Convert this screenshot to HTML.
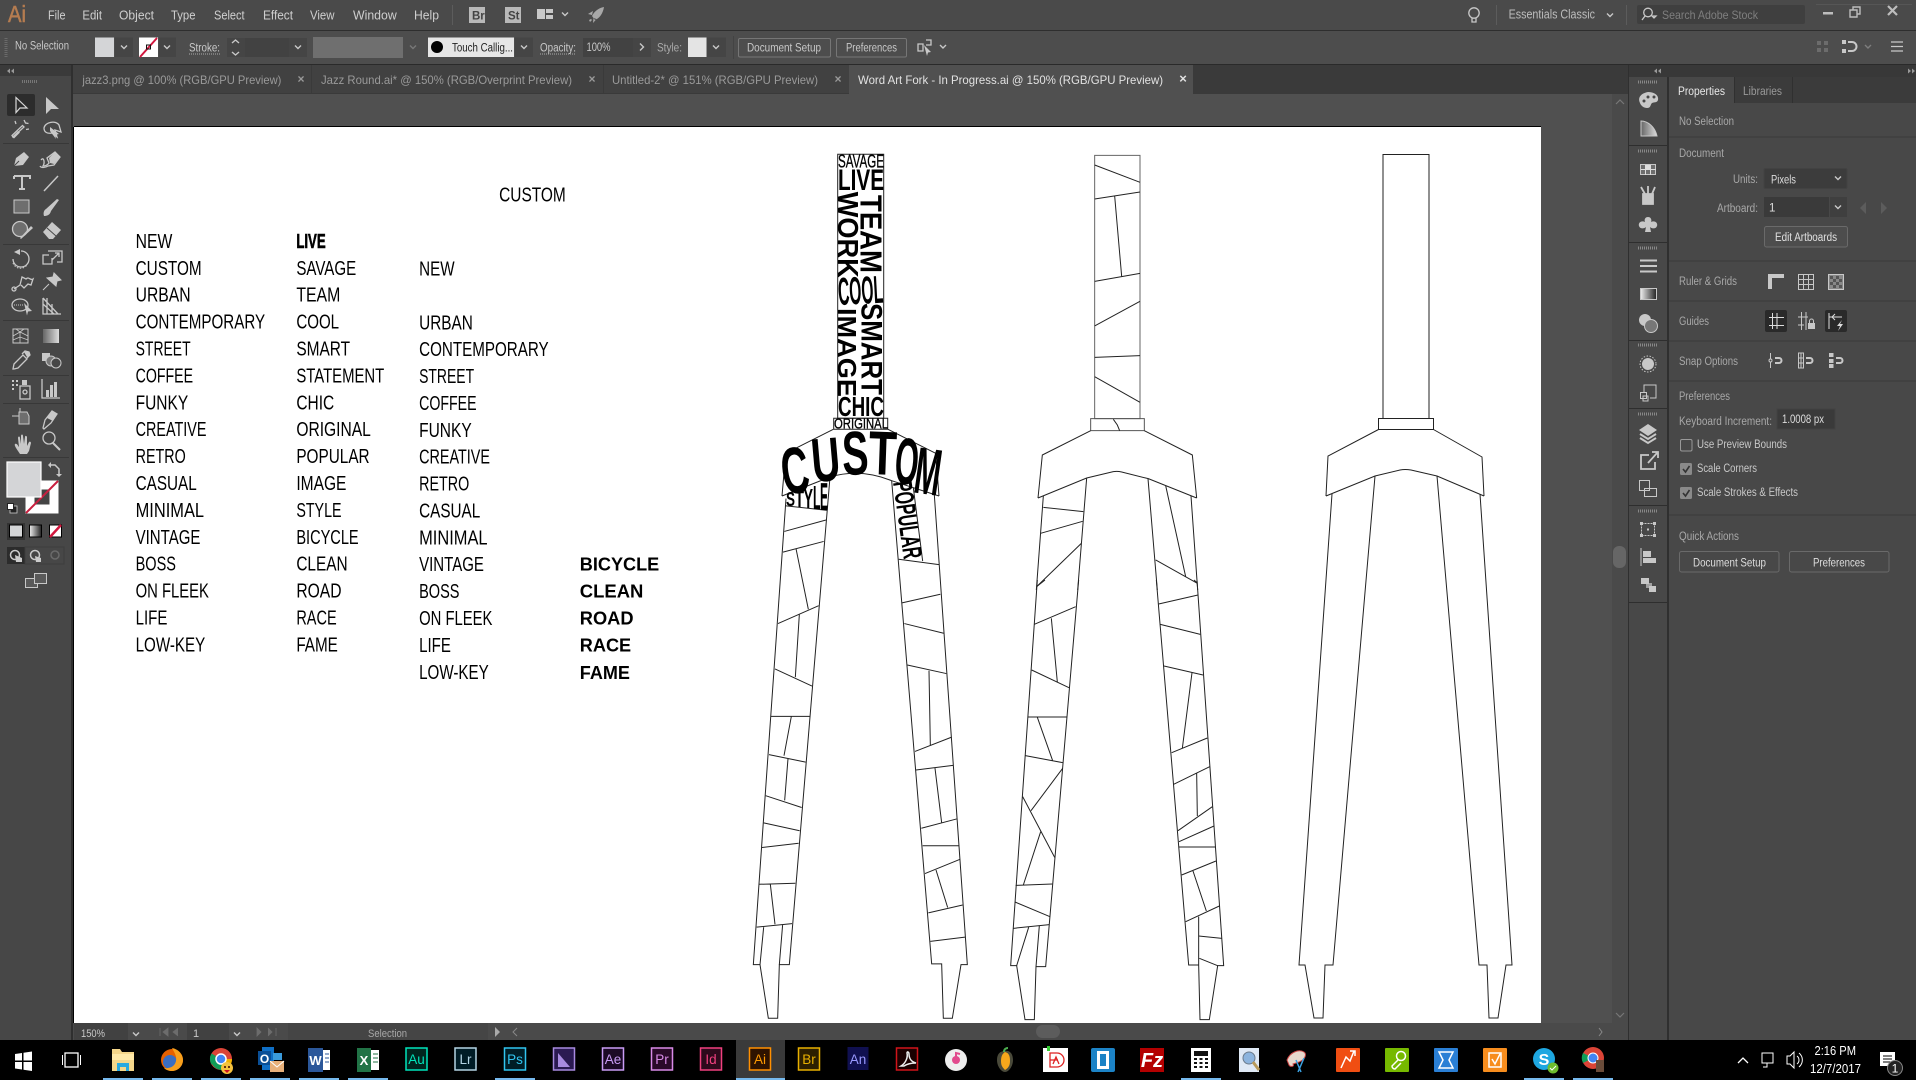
<!DOCTYPE html>
<html><head><meta charset="utf-8"><title>Adobe Illustrator</title>
<style>
html,body{margin:0;padding:0;background:#000;width:1916px;height:1080px;overflow:hidden}
svg{display:block;position:absolute;left:0;top:0}
text{font-family:"Liberation Sans",sans-serif}
.m{font-size:13px;fill:#cfcfcf}
.s{font-size:11.5px;fill:#c8c8c8}
.d{font-size:11.5px;fill:#a8a8a8}
.t{font-size:12px;fill:#9a9a9a}
.c{font-size:16.4px;fill:#000}
.b{font-size:15.4px;fill:#000;font-weight:bold}
.f *{fill:none;stroke:#222;stroke-width:1;vector-effect:non-scaling-stroke}
.k{font-weight:bold;fill:#000}
.ic{fill:none;stroke:#c8c8c8;stroke-width:1.3}
.fl{fill:#c8c8c8}
.ch{fill:none;stroke:#c8c8c8;stroke-width:1.4}
.tb{font-size:13.5px;text-anchor:middle}
</style></head><body>
<svg width="1916" height="1080" viewBox="0 0 1916 1080" xmlns="http://www.w3.org/2000/svg">
<defs>
<path id="ch" class="ch" d="M-3 -1.5L0 1.5L3 -1.5"/>
<linearGradient id="g1"><stop offset="0" stop-color="#666"/><stop offset="1" stop-color="#ddd"/></linearGradient><linearGradient id="g2"><stop offset="0" stop-color="#eee"/><stop offset="1" stop-color="#222"/></linearGradient>
</defs>
<!-- base -->
<rect width="1916" height="1080" fill="#505050"/>
<!-- menu bar -->
<rect width="1916" height="30" fill="#4a4a4a"/>
<rect y="30" width="1916" height="1" fill="#2e2e2e"/>
<text x="8" y="22" font-size="23" fill="#b57c50" stroke="#b57c50" stroke-width=".5" textLength="18" lengthAdjust="spacingAndGlyphs">Ai</text>
<text class="m" x="48" y="19.5" textLength="17.5" lengthAdjust="spacingAndGlyphs">File</text>
<text class="m" x="82.4" y="19.5" textLength="19.6" lengthAdjust="spacingAndGlyphs">Edit</text>
<text class="m" x="119" y="19.5" textLength="35" lengthAdjust="spacingAndGlyphs">Object</text>
<text class="m" x="171" y="19.5" textLength="24.5" lengthAdjust="spacingAndGlyphs">Type</text>
<text class="m" x="214" y="19.5" textLength="30.6" lengthAdjust="spacingAndGlyphs">Select</text>
<text class="m" x="263" y="19.5" textLength="30" lengthAdjust="spacingAndGlyphs">Effect</text>
<text class="m" x="310" y="19.5" textLength="24.5" lengthAdjust="spacingAndGlyphs">View</text>
<text class="m" x="353" y="19.5" textLength="43.7" lengthAdjust="spacingAndGlyphs">Window</text>
<text class="m" x="414" y="19.5" textLength="25" lengthAdjust="spacingAndGlyphs">Help</text>
<rect x="452" y="5" width="1" height="20" fill="#5c5c5c"/>
<rect x="469" y="7" width="16" height="16" fill="#b9b9b9"/><text x="472" y="19.5" font-size="11.5" font-weight="bold" fill="#444">Br</text>
<rect x="505" y="7" width="16" height="16" fill="#b9b9b9"/><text x="508" y="19.5" font-size="11.5" font-weight="bold" fill="#444">St</text>
<rect x="537" y="9" width="8" height="10" fill="#c8c8c8"/><rect x="546" y="9" width="7" height="4" fill="#c8c8c8"/><rect x="546" y="15" width="7" height="4" fill="#c8c8c8"/>
<use href="#ch" x="565" y="14"/>
<path d="M604 7C598 8 594 12 592 16L595 20C600 18 603 13 604 7ZM588 14l5-3-1 4zM593 23l.5-5 3 1z" fill="#a8a8a8"/><path d="M589 20l2-1 1 1-2 2z" fill="#a8a8a8"/>
<!-- right of menu bar -->
<circle cx="1474" cy="13" r="5.2" class="ic"/><path d="M1472 18v4h4v-4" class="ic"/>
<rect x="1496" y="5" width="1" height="20" fill="#5c5c5c"/>
<text class="m" x="1508.6" y="18.5" textLength="86.4" lengthAdjust="spacingAndGlyphs" style="fill:#bdbdbd">Essentials Classic</text>
<use href="#ch" x="1610" y="15"/>
<rect x="1626" y="5" width="1" height="20" fill="#5c5c5c"/>
<rect x="1637" y="5" width="168" height="19" rx="2" fill="#3f3f3f"/>
<circle cx="1648" cy="12.5" r="4.3" class="ic"/><path d="M1645 16l-3 4M1652 16h4l-2 2z" class="ic"/>
<text x="1662" y="19" font-size="12" fill="#7f7f7f" textLength="96" lengthAdjust="spacingAndGlyphs">Search Adobe Stock</text>
<rect x="1823" y="12" width="10" height="2.5" fill="#bdbdbd"/>
<path d="M1850 10h7v7h-7zM1853 10v-3h7v7h-3" fill="none" stroke="#bdbdbd" stroke-width="1.4"/>
<path d="M1888 6l9 9M1897 6l-9 9" stroke="#bdbdbd" stroke-width="2.2"/>
<rect x="1816" y="4" width="96" height="1" fill="#565656"/>
<!-- control bar -->
<rect y="31" width="1916" height="33" fill="#4d4d4d"/>
<rect y="64" width="1916" height="1" fill="#2a2a2a"/>
<path d="M6 38V57" stroke="#6a6a6a" stroke-width="3" stroke-dasharray="1 1"/>
<text class="s" x="15" y="49.5" textLength="54" lengthAdjust="spacingAndGlyphs">No Selection</text>
<rect x="95" y="37.5" width="19" height="19.5" fill="#d4d5d7"/>
<rect x="115" y="37.5" width="18" height="19.5" fill="#454545"/><use href="#ch" x="124" y="47"/>
<rect x="139" y="37.5" width="19" height="19.5" fill="#fff"/><path d="M140 57L157 38" stroke="#d2173e" stroke-width="2"/><rect x="146.500" y="45" width="4" height="4" fill="none" stroke="#111"/>
<rect x="159" y="37.5" width="17" height="19.5" fill="#454545"/><use href="#ch" x="167" y="47"/>
<text class="s" x="189" y="51.5" textLength="31" lengthAdjust="spacingAndGlyphs">Stroke:</text>
<path d="M189 54h31" stroke="#aaa" stroke-dasharray="1 1"/>
<rect x="227" y="38" width="18" height="19" fill="#454545"/>
<path d="M232 43l3.500-3 3.500 3M232 52l3.500 3 3.500-3" class="ch"/>
<rect x="245" y="38" width="44" height="19" fill="#424242"/>
<rect x="289" y="38" width="18" height="19" fill="#454545"/><use href="#ch" x="298" y="47"/>
<rect x="313" y="37" width="90" height="21" fill="#6f6f6f"/>
<use href="#ch" x="413" y="47" opacity=".35"/>
<rect x="428" y="37.500" width="86" height="19.500" fill="#e6e6e6"/>
<circle cx="437" cy="47" r="6" fill="#000"/>
<text x="452" y="51.500" font-size="11.500" fill="#222" textLength="61" lengthAdjust="spacingAndGlyphs">Touch Callig...</text>
<rect x="515" y="37.500" width="18" height="19.500" fill="#454545"/><use href="#ch" x="524" y="47"/>
<text class="s" x="540" y="51.500" textLength="36" lengthAdjust="spacingAndGlyphs">Opacity:</text>
<path d="M540 54h36" stroke="#aaa" stroke-dasharray="1 1"/>
<rect x="583" y="38" width="50" height="19" fill="#424242"/>
<text class="s" x="586.500" y="51" textLength="24" lengthAdjust="spacingAndGlyphs">100%</text>
<rect x="633" y="38" width="18" height="19" fill="#454545"/><path d="M640 43.500l3.500 3.500-3.500 3.500" class="ch"/>
<text class="s" x="657" y="51.500" textLength="25" lengthAdjust="spacingAndGlyphs" style="fill:#aaa">Style:</text>
<rect x="688" y="37.500" width="18.500" height="19.500" fill="#e4e4e4"/>
<rect x="707" y="37.500" width="19" height="19.500" fill="#454545"/><use href="#ch" x="716" y="47"/>
<rect x="733" y="36" width="1" height="23" fill="#434343"/>
<rect x="738.500" y="38.500" width="92" height="18.500" rx="1.500" fill="#4d4d4d" stroke="#767676"/>
<text class="s" x="747" y="51.500" textLength="74" lengthAdjust="spacingAndGlyphs">Document Setup</text>
<rect x="836.500" y="38.500" width="70" height="18.500" rx="1.500" fill="#4d4d4d" stroke="#767676"/>
<text class="s" x="846" y="51.500" textLength="51" lengthAdjust="spacingAndGlyphs">Preferences</text>
<path d="M918 44h5v7h-5zM926 40h5v5h-5" class="ic" stroke-width="1"/><path d="M924 45l7 7-3 .5-1 3.500z" class="fl"/>
<use href="#ch" x="943" y="46.500"/>
<path d="M1817 41h4v4h-4zM1824 41h4v4h-4zM1817 48h4v4h-4zM1824 48h4v4h-4z" fill="#6c6c6c"/>
<rect x="1842" y="40" width="4" height="4" fill="#c8c8c8"/><rect x="1842" y="49" width="4" height="4" fill="#c8c8c8"/><path d="M1848 42h4a4 4 0 010 9h-4" fill="none" stroke="#c8c8c8" stroke-width="2"/>
<use href="#ch" x="1868" y="46.500" opacity=".4"/>
<path d="M1891 42h12M1891 46.500h12M1891 51h12" stroke="#c8c8c8" stroke-width="1.200"/>
<!-- tab bar -->
<rect x="73" y="65" width="1555" height="29" fill="#3a3a3a"/>
<rect x="73" y="65" width="238" height="28" fill="#414141"/>
<rect x="312" y="65" width="291" height="28" fill="#414141"/>
<rect x="604" y="65" width="245" height="28" fill="#414141"/>
<rect x="849" y="65" width="344" height="29" fill="#505050"/>
<text class="t" x="82.400" y="84" textLength="199" lengthAdjust="spacingAndGlyphs">jazz3.png @ 100% (RGB/GPU Preview)</text>
<text x="301" y="83" font-size="12" font-weight="bold" fill="#9a9a9a" text-anchor="middle">×</text>
<text class="t" x="321" y="84" textLength="251" lengthAdjust="spacingAndGlyphs">Jazz Round.ai* @ 150% (RGB/Overprint Preview)</text>
<text x="592" y="83" font-size="12" font-weight="bold" fill="#9a9a9a" text-anchor="middle">×</text>
<text class="t" x="612" y="84" textLength="206" lengthAdjust="spacingAndGlyphs">Untitled-2* @ 151% (RGB/GPU Preview)</text>
<text x="838" y="83" font-size="12" font-weight="bold" fill="#9a9a9a" text-anchor="middle">×</text>
<text x="858" y="84" font-size="12" fill="#e2e2e2" textLength="305" lengthAdjust="spacingAndGlyphs">Word Art Fork - In Progress.ai @ 150% (RGB/GPU Preview)</text>
<text x="1183" y="83" font-size="13" font-weight="bold" fill="#e2e2e2" text-anchor="middle">×</text>
<!-- toolbar -->
<rect y="65" width="73" height="975" fill="#3a3a3a"/>
<rect y="76" width="71" height="964" fill="#474747"/>
<rect x="71" y="65" width="2" height="975" fill="#2f2f2f"/>
<path d="M7 71l3-2.500v5zM11 71l3-2.500v5z" fill="#999"/>
<path d="M22 81.500H37" stroke="#777" stroke-width="3" stroke-dasharray="1 1"/>
<g fill="#383838">
<rect x="3" y="143" width="66" height="1"/><rect x="3" y="244" width="66" height="1"/><rect x="3" y="320" width="66" height="1"/><rect x="3" y="375" width="66" height="1"/><rect x="3" y="403" width="66" height="1"/><rect x="3" y="457" width="66" height="1"/>
</g>
<rect x="7" y="94" width="28" height="22" rx="2" fill="#2c2c2c"/>
<!-- tools -->
<path d="M16 97.500v15l4-4.500 7 0z" fill="none" stroke="#d8d8d8" stroke-width="1.200"/>
<path d="M46 97v17l5-5h8z" class="fl"/>
<path d="M13 137l11-10-1.500-1.500L12 135.500zM24 120l1.500 3 3 .5M15 121l1 3M29 129l-3 .5" class="ic"/><path d="M12 137l6-6 2 1.500-6 6z" class="fl"/>
<path d="M44 128c1-6 12-8 15-3l2 7-6-2 2 7-5-4c-5 1-8-1-8-5z" fill="none" stroke="#c8c8c8" stroke-width="1.300"/><path d="M50 127l9 7-4 1 1 4-6-8z" class="fl"/>
<path d="M14 166l2-8 8-6 5 5-6 8z" class="fl"/><path d="M14 166l5-5" stroke="#474747"/>
<path d="M41 160c3-4 4 3 2 6 4 0 5-2 6-3l-2-5 8-6 5 5-6 8-6 1c-3 2-7 2-8 0" fill="none" stroke="#c8c8c8" stroke-width="1.300"/><path d="M49 158l6-6 5 5-6 7-4-1z" class="fl"/>
<path d="M14 176h16v3M22 176v13M19 189h6M14 176v3" fill="none" stroke="#c8c8c8" stroke-width="2"/>
<path d="M44 191l14-15" stroke="#c8c8c8" stroke-width="1.500"/>
<rect x="14" y="200" width="15" height="13" fill="#6e6e6e" stroke="#c8c8c8" stroke-width="1"/>
<path d="M44 216c3 0 6-1 7-5l8-11-2-1-11 10c-2 1-3 4-2 7z" class="fl"/>
<circle cx="20" cy="229" r="7.500" fill="#6e6e6e" stroke="#c8c8c8" stroke-width="1.300"/><path d="M20 238l11-12 2 2-12 11z" class="fl"/>
<path d="M43 232l9-10 9 8-8 9h-4z" class="fl"/><path d="M47 228l9 8" stroke="#474747"/>
<path d="M21 251a8 8 0 11-8 8" class="ic"/><path d="M14 252l6-3v6z" class="fl"/><path d="M13 263a8 8 0 0014 2" stroke="#c8c8c8" stroke-dasharray="1.500 1.500" fill="none"/>
<path d="M49 255h-6v9h9v-6M48 251h14v11h-5" class="ic"/><path d="M52 260l7-7M55 253h4v4" class="ic"/>
<path d="M14 289l6-4 2-8 4 2c3-3 4 2 7 0l-2 6-3-1-4 4-3-3" class="ic" stroke-width="1.600"/><circle cx="14" cy="289" r="2" class="ic"/>
<path d="M43 290l6-6M47 278l9 8 1-5 4-1-7-7-1 4z" fill="#c8c8c8" stroke="#c8c8c8"/>
<ellipse cx="20" cy="305" rx="8" ry="6" class="ic"/><path d="M14 305h10" stroke="#c8c8c8" stroke-dasharray="1 1"/><path d="M24 303l8 8-4 .5-1 4z" class="fl"/>
<path d="M43 298v16h18M43 298l15 16M43 304l11 10M47 298v16M52 304v10" class="ic" stroke-width="1"/>
<rect x="13" y="329" width="15" height="14" fill="none" stroke="#c8c8c8"/><path d="M13 336l7-4 8 4M20 332v11M13 340l7-3 8 3M16 329l4 3 4-3" fill="none" stroke="#c8c8c8" stroke-width=".8"/>
<rect x="43" y="329" width="16" height="14" fill="url(#g1)"/>
<path d="M13 369l1-5 9-9 4 4-9 9-4 1zM22 354l3-3 4 1 1 3-3 3" class="ic"/><path d="M24 352l4-1 2 4-3 2z" class="fl"/>
<rect x="42" y="353" width="8" height="8" class="fl"/><circle cx="51" cy="361" r="5" fill="#777" stroke="#c8c8c8"/><circle cx="56" cy="363" r="5" fill="#474747" stroke="#c8c8c8"/>
<path d="M12 381h2M16 381h2M12 385h2M16 385h2M12 389h2" stroke="#c8c8c8" stroke-width="2"/><rect x="20" y="386" width="10" height="13" fill="none" stroke="#c8c8c8" stroke-width="1.300"/><rect x="22" y="380" width="5" height="5" class="fl"/><circle cx="25" cy="392" r="2" class="ic"/>
<path d="M42 379v19h18" class="ic"/><path d="M46 397v-7h3v7zM50 397v-12h3v12zM54 397v-15h3v15z" class="fl"/>
<path d="M15 416h4M20 408v5M12 416h6" stroke="#c8c8c8" fill="none"/><path d="M19 412h8l2 4v8h-10z" fill="#6e6e6e" stroke="#c8c8c8"/>
<path d="M43 428l2-8 7-9 5 3-6 9-7 6z" fill="none" stroke="#c8c8c8" stroke-width="1.300"/><path d="M47 418l5-7 5 3-4 7z" class="fl"/>
<path d="M18 451c-2-3-4-6-3-7 2-1 3 2 4 3l-1-9c0-2 2-2 2 0l1 6 0-8c0-2 2-2 2 0l1 8 1-7c0-2 2-1 2 0l0 9 2-4c1-1 2 0 2 1l-2 8-2 3h-7z" class="fl"/>
<circle cx="49" cy="438" r="6" class="ic"/><path d="M53 443l7 7" stroke="#c8c8c8" stroke-width="2"/>
<!-- fill/stroke -->
<rect x="25.500" y="480.500" width="33" height="33" fill="#fff"/><rect x="34.500" y="489.500" width="15" height="15" fill="#444"/><path d="M26 513L58 481" stroke="#c91f3f" stroke-width="2"/>
<rect x="7" y="462" width="34" height="35" fill="#d4d5d7" stroke="#fff" stroke-width="1.200"/>
<path d="M51 465h4l4 4v5" fill="none" stroke="#c8c8c8" stroke-width="1.500"/><path d="M51 462v6l-3-3zM56 474h6l-3 3z" class="fl"/>
<rect x="10" y="506" width="7" height="7" fill="#222" stroke="#ccc" stroke-width=".8"/><rect x="7.500" y="503.500" width="6" height="6" fill="#fff" stroke="#222"/>
<rect x="7" y="523" width="18" height="17" fill="#333"/><rect x="9.500" y="525" width="13" height="12" fill="#d4d5d7" stroke="#000"/>
<rect x="29.500" y="525" width="12" height="12" fill="url(#g2)" stroke="#000"/>
<rect x="49.500" y="525" width="12" height="12" fill="#fff" stroke="#000"/><path d="M50 537L61 525" stroke="#d2173e" stroke-width="2.500"/>
<rect x="7" y="547" width="18" height="17" fill="#2c2c2c"/><rect x="25" y="547" width="39" height="17" fill="none" stroke="#3d3d3d"/>
<circle cx="15" cy="555" r="4.500" fill="none" stroke="#ccc" stroke-width="1.500"/><path d="M15 555l7 3v4h-6z" fill="#ccc"/>
<circle cx="35" cy="555" r="4.500" fill="none" stroke="#ccc" stroke-width="1.500"/><path d="M35 556l6 2v4h-5z" fill="#ccc"/>
<circle cx="55" cy="555" r="4" fill="none" stroke="#6a6a6a" stroke-width="1.500"/>
<rect x="25.500" y="578.500" width="12" height="9" fill="#5a5a5a" stroke="#c8c8c8"/><rect x="34.500" y="573.500" width="12" height="10" fill="#5a5a5a" stroke="#c8c8c8"/>
<!-- canvas -->
<rect x="73" y="94" width="1555" height="946" fill="#505050"/>
<rect x="74" y="127" width="1467" height="896" fill="#fff"/>
<rect x="74" y="126" width="1467" height="1" fill="#000"/>
<rect x="73" y="127" width="1" height="896" fill="#000"/>
<!-- word lists -->
<g transform="scale(1.22194)">
<text class="c" x="408.500" y="165" textLength="54.500" lengthAdjust="spacingAndGlyphs">CUSTOM</text>
<g>
<text class="c" x="111" y="203" textLength="30" lengthAdjust="spacingAndGlyphs">NEW</text>
<text class="c" x="111" y="225" textLength="54" lengthAdjust="spacingAndGlyphs">CUSTOM</text>
<text class="c" x="111" y="246.700" textLength="45" lengthAdjust="spacingAndGlyphs">URBAN</text>
<text class="c" x="111" y="269" textLength="106" lengthAdjust="spacingAndGlyphs">CONTEMPORARY</text>
<text class="c" x="111" y="291" textLength="45" lengthAdjust="spacingAndGlyphs">STREET</text>
<text class="c" x="111" y="313" textLength="47" lengthAdjust="spacingAndGlyphs">COFFEE</text>
<text class="c" x="111" y="335" textLength="43" lengthAdjust="spacingAndGlyphs">FUNKY</text>
<text class="c" x="111" y="357" textLength="58" lengthAdjust="spacingAndGlyphs">CREATIVE</text>
<text class="c" x="111" y="379" textLength="41" lengthAdjust="spacingAndGlyphs">RETRO</text>
<text class="c" x="111" y="401" textLength="50" lengthAdjust="spacingAndGlyphs">CASUAL</text>
<text class="c" x="111" y="423" textLength="56" lengthAdjust="spacingAndGlyphs">MINIMAL</text>
<text class="c" x="111" y="445" textLength="53" lengthAdjust="spacingAndGlyphs">VINTAGE</text>
<text class="c" x="111" y="467" textLength="33" lengthAdjust="spacingAndGlyphs">BOSS</text>
<text class="c" x="111" y="489" textLength="60" lengthAdjust="spacingAndGlyphs">ON FLEEK</text>
<text class="c" x="111" y="511" textLength="26" lengthAdjust="spacingAndGlyphs">LIFE</text>
<text class="c" x="111" y="533" textLength="57" lengthAdjust="spacingAndGlyphs">LOW-KEY</text>
</g>
<g>
<text class="c" x="242.500" y="203" textLength="24" lengthAdjust="spacingAndGlyphs" font-weight="bold" stroke="#000" stroke-width=".5">LIVE</text>
<text class="c" x="242.500" y="225" textLength="49" lengthAdjust="spacingAndGlyphs">SAVAGE</text>
<text class="c" x="242.500" y="246.700" textLength="36" lengthAdjust="spacingAndGlyphs">TEAM</text>
<text class="c" x="242.500" y="269" textLength="35" lengthAdjust="spacingAndGlyphs">COOL</text>
<text class="c" x="242.500" y="291" textLength="44" lengthAdjust="spacingAndGlyphs">SMART</text>
<text class="c" x="242.500" y="313" textLength="72" lengthAdjust="spacingAndGlyphs">STATEMENT</text>
<text class="c" x="242.500" y="335" textLength="31" lengthAdjust="spacingAndGlyphs">CHIC</text>
<text class="c" x="242.500" y="357" textLength="61" lengthAdjust="spacingAndGlyphs">ORIGINAL</text>
<text class="c" x="242.500" y="379" textLength="60" lengthAdjust="spacingAndGlyphs">POPULAR</text>
<text class="c" x="242.500" y="401" textLength="41" lengthAdjust="spacingAndGlyphs">IMAGE</text>
<text class="c" x="242.500" y="423" textLength="37" lengthAdjust="spacingAndGlyphs">STYLE</text>
<text class="c" x="242.500" y="445" textLength="51" lengthAdjust="spacingAndGlyphs">BICYCLE</text>
<text class="c" x="242.500" y="467" textLength="42" lengthAdjust="spacingAndGlyphs">CLEAN</text>
<text class="c" x="242.500" y="489" textLength="37" lengthAdjust="spacingAndGlyphs">ROAD</text>
<text class="c" x="242.500" y="511" textLength="33" lengthAdjust="spacingAndGlyphs">RACE</text>
<text class="c" x="242.500" y="533" textLength="34" lengthAdjust="spacingAndGlyphs">FAME</text>
</g>
<g transform="translate(0,-.5)">
<text class="c" x="343" y="226" textLength="29" lengthAdjust="spacingAndGlyphs">NEW</text>
<text class="c" x="343" y="270" textLength="44" lengthAdjust="spacingAndGlyphs">URBAN</text>
<text class="c" x="343" y="292" textLength="106" lengthAdjust="spacingAndGlyphs">CONTEMPORARY</text>
<text class="c" x="343" y="314" textLength="45" lengthAdjust="spacingAndGlyphs">STREET</text>
<text class="c" x="343" y="336" textLength="47" lengthAdjust="spacingAndGlyphs">COFFEE</text>
<text class="c" x="343" y="358" textLength="43" lengthAdjust="spacingAndGlyphs">FUNKY</text>
<text class="c" x="343" y="380" textLength="58" lengthAdjust="spacingAndGlyphs">CREATIVE</text>
<text class="c" x="343" y="402" textLength="41" lengthAdjust="spacingAndGlyphs">RETRO</text>
<text class="c" x="343" y="424" textLength="50" lengthAdjust="spacingAndGlyphs">CASUAL</text>
<text class="c" x="343" y="446" textLength="56" lengthAdjust="spacingAndGlyphs">MINIMAL</text>
<text class="c" x="343" y="468" textLength="53" lengthAdjust="spacingAndGlyphs">VINTAGE</text>
<text class="c" x="343" y="490" textLength="33" lengthAdjust="spacingAndGlyphs">BOSS</text>
<text class="c" x="343" y="512" textLength="60" lengthAdjust="spacingAndGlyphs">ON FLEEK</text>
<text class="c" x="343" y="534" textLength="26" lengthAdjust="spacingAndGlyphs">LIFE</text>
<text class="c" x="343" y="556" textLength="57" lengthAdjust="spacingAndGlyphs">LOW-KEY</text>
</g>
<g>
<text class="b" x="474.500" y="467" textLength="65" lengthAdjust="spacingAndGlyphs">BICYCLE</text>
<text class="b" x="474.500" y="489" textLength="52" lengthAdjust="spacingAndGlyphs">CLEAN</text>
<text class="b" x="474.500" y="511" textLength="44" lengthAdjust="spacingAndGlyphs">ROAD</text>
<text class="b" x="474.500" y="533" textLength="42" lengthAdjust="spacingAndGlyphs">RACE</text>
<text class="b" x="474.500" y="555.500" textLength="41" lengthAdjust="spacingAndGlyphs">FAME</text>
</g>
</g>
<!-- fork 1 outline -->
<g class="f">
<rect x="837.700" y="154.300" width="46" height="264"/>
<rect x="833.700" y="418.300" width="54" height="11"/>
<path d="M833.300 429.300L785.700 453.300L782 496M888 429.300L935.700 453.300L939 496M782 496L830 477Q860 468 891.700 480.700L939 496"/>
<g transform="translate(750,470) scale(.33333,.35714)">
<path d="M108 80L10 1385H30L55 1535H83L88 1385H118L240 20"/>
<path d="M425 30L545 1383H575L580 1535H607L633 1385H652L553 70"/>
<path d="M105 100L232 113M103 172L228 140M99 230L221 200M138 220L175 390M84 430L206 380M148 405L136 580M75 557L186 605M63 690H179M124 690L102 800M57 797L167 818M114 808L104 925M47 912L155 945M41 988L149 1010M36 1057L146 1045M28 1160L136 1157M61 1160L75 1272M20 1280L126 1270M41 1280L30 1385M98 1272L88 1385"/>
<path d="M446 250L567 265M456 372L571 348M463 430L581 457M472 546L589 570M537 562L541 770M495 788L605 748M498 840L609 827M555 835L575 988M514 1003L620 977M518 1052H626M525 1130L630 1090M558 1120L593 1225M535 1240L638 1218M541 1320L645 1308M490 50L518 255"/>
</g>
</g>
<!-- fork 1 words -->
<g class="k">
<text x="838" y="167.700" font-size="18.500" textLength="46" lengthAdjust="spacingAndGlyphs" style="font-weight:normal" stroke="#000" stroke-width=".3">SAVAGE</text>
<text x="838" y="190" font-size="30" textLength="46" lengthAdjust="spacingAndGlyphs">LIVE</text>
<text transform="translate(838,191.700) rotate(90)" font-size="28.500" textLength="86" lengthAdjust="spacingAndGlyphs">WORK</text>
<text transform="translate(860.500,195) rotate(90)" font-size="31" textLength="78" lengthAdjust="spacingAndGlyphs">TEAM</text>
<text transform="translate(838.700,305) rotate(-3)" font-size="39" textLength="45" lengthAdjust="spacingAndGlyphs">COOL</text>
<text transform="translate(838,308) rotate(90)" font-size="26" textLength="89" lengthAdjust="spacingAndGlyphs">IMAGE</text>
<text transform="translate(861.700,303) rotate(90)" font-size="29.500" textLength="92" lengthAdjust="spacingAndGlyphs">SMART</text>
<text x="838" y="416" font-size="28" textLength="46" lengthAdjust="spacingAndGlyphs">CHIC</text>
<text x="834" y="428.700" font-size="14.300" textLength="54" lengthAdjust="spacingAndGlyphs" style="font-weight:normal" stroke="#000" stroke-width=".3">ORIGINAL</text>
<text transform="translate(798,493) rotate(-8) scale(.58,1)" font-size="66" text-anchor="middle">C</text>
<text transform="translate(827.500,481) rotate(-5) scale(.64,1)" font-size="62" text-anchor="middle">U</text>
<text transform="translate(856,474.500) rotate(-2) scale(.64,1)" font-size="62" text-anchor="middle">S</text>
<text transform="translate(882,474.500) rotate(2) scale(.74,1)" font-size="62" text-anchor="middle">T</text>
<text transform="translate(905,484) rotate(5) scale(.46,1)" font-size="66" text-anchor="middle">O</text>
<text transform="translate(925,494) rotate(8) scale(.47,1)" font-size="66" text-anchor="middle">M</text>
<text x="786" y="506" font-size="20" textLength="9" lengthAdjust="spacingAndGlyphs">S</text>
<text x="795" y="507" font-size="24" textLength="9" lengthAdjust="spacingAndGlyphs">T</text>
<text x="803.500" y="508" font-size="28" textLength="9.500" lengthAdjust="spacingAndGlyphs">Y</text>
<text x="813" y="509" font-size="33" textLength="7.500" lengthAdjust="spacingAndGlyphs">L</text>
<text x="820" y="510" font-size="39" textLength="8" lengthAdjust="spacingAndGlyphs">E</text>
<text transform="translate(893,482.500) rotate(82)" font-size="27" textLength="78" lengthAdjust="spacingAndGlyphs">POPULAR</text>
</g>
<!-- fork 2 -->
<g class="f">
<g transform="translate(1000,140) scale(.33333)">
<rect x="284" y="46" width="136" height="790" style="stroke:#666"/>
<rect x="272" y="836" width="161" height="36" style="stroke:#555"/>
<path d="M284 75L420 127M284 177L420 156M344 168L365 409M284 424L420 400M284 558L420 484M284 652L420 647M284 710L420 787M340 838L352 855L359 872"/>
<path d="M272 872L127 945L114 1074M433 872L577 945L590 1074M114 1074L260 1014L340 995Q352 993 365 996L445 1016L590 1074"/>
<path d="M130 1068L109 1350M260 1014L233 1350M444 1016L472 1350M573 1068L593 1350"/>
<path d="M130 1102L250 1115M122 1180L248 1144M110 1340L244 1210M497 1037L557 1310M467 1260L592 1330"/>
</g>
<g transform="translate(1000,580) scale(.33333)">
<path d="M112 0L32 1157H50L75 1319H103L108 1160H137L236 0"/>
<path d="M469 0L566 1155H596V1010M596 1155L600 1319H628L653 1157H671L591 0"/>
<path d="M110 20L135 0M103 133L227 80M154 115L172 306M95 270L207 323M84 411H200M112 412L158 542M76 527L188 548M188 565L93 692M68 650L164 832M122 755L70 915M47 916L157 912M45 966L150 1010M40 1045L148 1034M86 1042L50 1157M118 1037L108 1160"/>
<path d="M582 0L591 8M476 72L594 45M481 133L601 163M492 258L609 285M576 278L547 505M515 518L622 474M521 613L629 560M590 580L592 708M534 752L637 680M537 785L642 738M536 801H647M545 885L648 843M579 873L619 993M557 1025L658 978M596 1068L666 1075M598 1135L653 1157"/>
</g>
<!-- fork 3 -->
<rect x="1383" y="154.500" width="46" height="264"/>
<rect x="1378.500" y="418.500" width="55" height="11"/>
<path d="M1378.500 429.500L1328 456L1326 496M1433.500 429.500L1482 457L1484 496M1326 496L1375 476L1400 470Q1405 469 1411 470L1437 476L1484 496"/>
<path d="M1332 494L1299 965H1305L1314 1018H1323L1325 965H1333L1375 476M1437 476L1479 965H1487L1489 1018H1498L1506 965H1512L1480 494"/>
</g>
<!-- vertical scrollbar -->
<rect x="1612" y="94" width="16" height="929" fill="#4a4a4a"/>
<path d="M1616 104l4-4 4 4M1616 1013l4 4 4-4" fill="none" stroke="#777" stroke-width="1.200"/>
<rect x="1613" y="546" width="13" height="22" rx="6" fill="#666"/>
<!-- status bar -->
<rect x="73" y="1023" width="1555" height="17" fill="#4a4a4a"/>
<rect x="74" y="1023" width="54" height="17" fill="#414141"/>
<text class="s" x="81" y="1037" textLength="24" lengthAdjust="spacingAndGlyphs" style="font-size:11px">150%</text>
<use href="#ch" x="136" y="1034"/>
<path d="M160 1028v8M168 1028l-5 4 5 4zM178 1028l-5 4 5 4" fill="#6c6c6c" stroke="#6c6c6c" stroke-width=".8"/>
<rect x="187" y="1023" width="42" height="17" fill="#414141"/>
<text class="s" x="193" y="1037" style="font-size:11px">1</text>
<use href="#ch" x="237" y="1034"/>
<path d="M257 1028l4 4-4 4zM268 1028l4 4-4 4M276 1028v8" fill="#6c6c6c" stroke="#6c6c6c" stroke-width=".8"/>
<rect x="288" y="1023" width="200" height="17" fill="#454545"/>
<text x="368" y="1037" font-size="11" fill="#a8a8a8" textLength="39" lengthAdjust="spacingAndGlyphs">Selection</text>
<path d="M495 1027l5 5-5 5z" fill="#aaa"/>
<path d="M517 1028l-4 4 4 4" fill="none" stroke="#888"/>
<rect x="1036" y="1025" width="24" height="13" rx="6.500" fill="#5c5c5c"/>
<path d="M1599 1028l3 4-3 4" fill="none" stroke="#888"/>
<!-- right strip + dock -->
<rect x="1628" y="65" width="288" height="975" fill="#484848"/>
<rect x="1628" y="65" width="288" height="12" fill="#383838"/>
<path d="M1654 71l3-2.500v5zM1658 71l3-2.500v5zM1908 68.500l3 2.500-3 2.500zM1912 68.500l3 2.500-3 2.500z" fill="#999"/>
<rect x="1628" y="65" width="1" height="975" fill="#2f2f2f"/>
<rect x="1667" y="77" width="2" height="963" fill="#2f2f2f"/>
<g fill="#2e2e2e"><rect x="1629" y="145" width="38" height="1"/><rect x="1629" y="242" width="38" height="1"/><rect x="1629" y="340" width="38" height="1"/><rect x="1629" y="408" width="38" height="1"/><rect x="1629" y="505" width="38" height="1"/><rect x="1629" y="602" width="38" height="1"/></g>
<g stroke="#888" stroke-width="3" stroke-dasharray="1 1"><path d="M1638 82h20M1638 151h20M1638 248h20M1638 345h20M1638 414h20M1638 511h20"/></g>
<path d="M1640 103c-3-6 2-10 8-11 6 0 11 3 10 8-1 3-4 2-6 3-2 2-1 5-5 5-3 0-6-2-7-5z" class="fl"/>
<circle cx="1644" cy="101" r="1.500" fill="#484848"/><circle cx="1648" cy="97" r="1.500" fill="#484848"/><circle cx="1654" cy="97" r="1.500" fill="#484848"/>
<path d="M1641 121c7 0 14 6 16 15h-16z" fill="url(#g1)" stroke="#c8c8c8"/>
<rect x="1640.500" y="164.500" width="15" height="10" fill="#6e6e6e" stroke="#c8c8c8"/><path d="M1645.500 165v10M1650.500 165v10M1641 169.500h15" stroke="#ddd"/><rect x="1646" y="165" width="4.500" height="4.500" fill="#ddd"/>
<path d="M1643 194h10v10h-10zM1641 187l4 7M1648 186v8M1655 187l-3 7" fill="#c8c8c8" stroke="#c8c8c8" stroke-width="1.800"/>
<path d="M1648 217c3 0 4 3 3 5 4-2 7 1 6 4-1 3-5 3-7 1l1 5h-6l1-5c-2 2-6 2-7-1-1-3 2-6 6-4-1-2 0-5 3-5z" class="fl"/>
<path d="M1640 260.500h17M1640 266h17M1640 271.500h17" stroke="#c8c8c8" stroke-width="2"/>
<rect x="1640.500" y="288.500" width="16" height="11" fill="url(#g2)" stroke="#c8c8c8"/>
<circle cx="1645" cy="320" r="6" fill="#c8c8c8"/><circle cx="1651" cy="326" r="6.500" fill="#777" stroke="#c8c8c8"/>
<circle cx="1648" cy="364" r="6" class="fl"/><circle cx="1648" cy="364" r="8" fill="none" stroke="#c8c8c8" stroke-dasharray="1.500 1.500"/>
<path d="M1644 392v-7h12v13h-6M1640.500 392.500h6v6h-6zM1643 396h5v5h-5z" fill="none" stroke="#c8c8c8"/>
<path d="M1648 424l9 6-9 6-9-6z" class="fl"/><path d="M1640 434l8 5 8-5" fill="none" stroke="#c8c8c8" stroke-width="2"/><path d="M1640 438l8 5 8-5" fill="none" stroke="#c8c8c8" stroke-width="2"/>
<path d="M1649 455h-8v14h14v-7M1648 463l9-10M1652 452h6v6" fill="none" stroke="#c8c8c8" stroke-width="1.800"/>
<path d="M1639.500 480.500h10v10h-10zM1644.500 488.500h12v8h-12zM1649.500 485v4" fill="none" stroke="#c8c8c8"/>
<rect x="1641.500" y="523.500" width="13" height="12" fill="none" stroke="#c8c8c8" stroke-dasharray="2 1"/><path d="M1640 522h3v3h-3zM1653 522h3v3h-3zM1640 534h3v3h-3zM1653 534h3v3h-3zM1647 528.500h2v2h-2z" class="fl"/>
<path d="M1641 548v18" stroke="#c8c8c8"/><rect x="1643" y="551" width="8" height="6" class="fl"/><rect x="1643" y="558" width="13" height="5" class="fl"/>
<rect x="1641" y="578" width="8" height="6" class="fl"/><rect x="1646" y="583" width="6" height="5" class="fl" opacity=".7"/><rect x="1649" y="586" width="7" height="6" class="fl"/>
<!-- properties panel -->
<rect x="1669" y="77" width="247" height="26" fill="#3b3b3b"/>
<rect x="1669" y="77" width="65" height="26" fill="#484848"/>
<rect x="1734" y="77" width="1" height="26" fill="#303030"/><rect x="1792" y="77" width="1" height="26" fill="#303030"/>
<text x="1678" y="95" font-size="11.500" fill="#e8e8e8" textLength="47" lengthAdjust="spacingAndGlyphs">Properties</text>
<text x="1743" y="95" font-size="11.500" fill="#999" textLength="39" lengthAdjust="spacingAndGlyphs">Libraries</text>
<text class="d" x="1679" y="125" textLength="55" lengthAdjust="spacingAndGlyphs">No Selection</text>
<g fill="#414141"><rect x="1669" y="136" width="247" height="2"/><rect x="1669" y="260" width="247" height="2"/><rect x="1669" y="300" width="247" height="2"/><rect x="1669" y="340" width="247" height="2"/><rect x="1669" y="380" width="247" height="2"/><rect x="1669" y="514" width="247" height="2"/></g>
<text class="d" x="1679" y="157" textLength="45" lengthAdjust="spacingAndGlyphs">Document</text>
<text class="d" x="1733" y="183" textLength="25" lengthAdjust="spacingAndGlyphs">Units:</text>
<rect x="1764" y="168.500" width="83" height="20" rx="1.500" fill="#3c3c3c" stroke="#424242"/>
<text class="s" x="1771" y="183.500" textLength="25" lengthAdjust="spacingAndGlyphs" style="fill:#ddd">Pixels</text>
<use href="#ch" x="1838" y="178"/>
<text class="d" x="1717" y="212" textLength="41" lengthAdjust="spacingAndGlyphs">Artboard:</text>
<rect x="1764" y="197" width="65" height="20" fill="#3a3a3a"/>
<rect x="1830" y="197" width="17" height="20" fill="#3f3f3f"/>
<text class="s" x="1769" y="211.500" style="fill:#ddd">1</text>
<use href="#ch" x="1838" y="207"/>
<path d="M1866 202l-6 6 6 6zM1881 202l6 6-6 6z" fill="#5c5c5c"/>
<rect x="1764.500" y="226.500" width="83" height="20.500" rx="2" fill="#4d4d4d" stroke="#6a6a6a"/>
<text class="s" x="1775" y="241.200" textLength="62" lengthAdjust="spacingAndGlyphs" style="fill:#e0e0e0">Edit Artboards</text>
<text class="d" x="1679" y="285" textLength="58" lengthAdjust="spacingAndGlyphs">Ruler &amp; Grids</text>
<path d="M1768 274h16v4h-12v11h-4z" class="fl"/>
<path d="M1798.500 274.500h15v15h-15zM1803.500 274.500v15M1808.500 274.500v15M1798.500 279.500h15M1798.500 284.500h15" fill="none" stroke="#c8c8c8"/>
<rect x="1828.500" y="274.500" width="15" height="15" fill="#888" stroke="#c8c8c8"/>
<path d="M1830 276h3v3h-3zM1836 276h3v3h-3zM1833 279h3v3h-3zM1839 279h3v3h-3zM1830 282h3v3h-3zM1836 282h3v3h-3zM1833 285h3v3h-3zM1839 285h3v3h-3z" fill="#555"/>
<text class="d" x="1679" y="325" textLength="30" lengthAdjust="spacingAndGlyphs">Guides</text>
<rect x="1765" y="310" width="22" height="22" rx="2" fill="#2a2a2a"/>
<path d="M1769 317.500h15M1769 325.500h15M1772.500 313v16M1777 313v16" stroke="#ddd"/>
<path d="M1798 317h10M1798 325h6M1801.500 312v18M1806 312v18" stroke="#c8c8c8"/><rect x="1808" y="323" width="7" height="6" class="fl"/><path d="M1809.500 323v-2a2 2 0 014 0v2" fill="none" stroke="#c8c8c8"/>
<rect x="1825" y="310" width="22" height="22" rx="2" fill="#2a2a2a"/>
<path d="M1829 313v16M1829 317h13M1835 314l-3 3 3 3" fill="none" stroke="#ddd"/><path d="M1842 320l-5 6h3l-2 5 5-7h-3l2-4z" fill="#ddd"/>
<text class="d" x="1679" y="365" textLength="59" lengthAdjust="spacingAndGlyphs">Snap Options</text>
<g><path d="M1770.500 353v15" stroke="#c8c8c8"/><circle cx="1770.500" cy="360.500" r="1.500" fill="#484848" stroke="#c8c8c8"/><path d="M1775 358h4a2.500 2.500 0 010 5h-4" fill="none" stroke="#c8c8c8" stroke-width="2"/>
<path d="M1798.500 353h5v15h-5zM1798.500 358h5M1798.500 363h5M1801 353v15" fill="none" stroke="#c8c8c8"/><path d="M1806 358h4a2.500 2.500 0 010 5h-4" fill="none" stroke="#c8c8c8" stroke-width="2"/>
<rect x="1829" y="353" width="4.500" height="4" class="fl"/><rect x="1829" y="359" width="4.500" height="4" class="fl"/><rect x="1829" y="364" width="4.500" height="4" class="fl"/><path d="M1836 358h4a2.500 2.500 0 010 5h-4" fill="none" stroke="#c8c8c8" stroke-width="2"/></g>
<text class="d" x="1679" y="400" textLength="51" lengthAdjust="spacingAndGlyphs">Preferences</text>
<text class="d" x="1679" y="425" textLength="93" lengthAdjust="spacingAndGlyphs">Keyboard Increment:</text>
<rect x="1777" y="409" width="58" height="20" fill="#3a3a3a" stroke="#424242"/>
<text class="s" x="1782" y="423" textLength="42" lengthAdjust="spacingAndGlyphs" style="fill:#ddd">1.0008 px</text>
<rect x="1680.500" y="439.500" width="11.500" height="11.500" rx="1.500" fill="#484848" stroke="#999"/>
<text class="s" x="1697" y="448" textLength="90" lengthAdjust="spacingAndGlyphs">Use Preview Bounds</text>
<rect x="1680" y="463" width="12" height="12" rx="1.500" fill="#8a8a8a"/><path d="M1683 469l2.500 3 4-6" fill="none" stroke="#333" stroke-width="1.600"/>
<text class="s" x="1697" y="472" textLength="60" lengthAdjust="spacingAndGlyphs">Scale Corners</text>
<rect x="1680" y="487" width="12" height="12" rx="1.500" fill="#8a8a8a"/><path d="M1683 493l2.500 3 4-6" fill="none" stroke="#333" stroke-width="1.600"/>
<text class="s" x="1697" y="496" textLength="101" lengthAdjust="spacingAndGlyphs">Scale Strokes &amp; Effects</text>
<text class="d" x="1679" y="540" textLength="60" lengthAdjust="spacingAndGlyphs">Quick Actions</text>
<rect x="1679.500" y="551.500" width="99.500" height="20.500" rx="2" fill="#484848" stroke="#6a6a6a"/>
<text class="s" x="1693" y="566.700" textLength="73" lengthAdjust="spacingAndGlyphs" style="fill:#ddd">Document Setup</text>
<rect x="1789.500" y="551.500" width="99.500" height="20.500" rx="2" fill="#484848" stroke="#6a6a6a"/>
<text class="s" x="1813" y="566.700" textLength="52" lengthAdjust="spacingAndGlyphs" style="fill:#ddd">Preferences</text>
<!-- taskbar -->
<rect y="1040" width="1916" height="40" fill="#000"/>
<rect x="736" y="1040" width="49" height="40" fill="#3a3a3a"/>
<path d="M15 1054l7-1v7.500h-7zM23.500 1052.700l8.500-1.200v9h-8.500zM15 1062h7v7.500l-7-1zM23.500 1062H32v9l-8.500-1.200z" fill="#fff"/>
<rect x="65" y="1053" width="13" height="14" fill="none" stroke="#fff" stroke-width="1.300"/><path d="M62.500 1055v10M80.500 1055v10" stroke="#fff"/>
<!-- folder -->
<path d="M112 1049h8l2 3h12v19h-22z" fill="#f4d68a"/><rect x="112" y="1054" width="22" height="6" fill="#ffe9a8"/><path d="M117 1071v-8h12v8h-3v-4h-6v4z" fill="#29a9e0"/>
<!-- firefox -->
<circle cx="172" cy="1060" r="11" fill="#e66000"/><circle cx="170" cy="1062" r="7" fill="#3a6ec2"/><path d="M172 1048c6 1 11 6 11 12 0 6-5 11-11 11-3 0-6-1-8-3 6 1 11-2 12-7 1-5-2-9-4-13z" fill="#f7a01d"/>
<!-- chrome -->
<circle cx="221" cy="1059" r="11" fill="#db4437"/><path d="M221 1059l-9.500 5.500a11 11 0 0 1 0-11z" fill="#0f9d58"/><path d="M212 1064l9-5 5 10a11 11 0 0 1-14-5z" fill="#0f9d58"/><path d="M221 1059h11a11 11 0 0 1-6 10z" fill="#f4b400"/><circle cx="221" cy="1059" r="5" fill="#4285f4" stroke="#fff" stroke-width="1.500"/><circle cx="227" cy="1068" r="6" fill="#f5c23e"/><circle cx="225" cy="1067" r="1" fill="#300"/><circle cx="229" cy="1067" r="1" fill="#300"/><path d="M224 1070h6l-3 3z" fill="#c12"/>
<!-- outlook -->
<rect x="262" y="1047" width="12" height="23" fill="#0f6fc6"/><rect x="258" y="1051" width="13" height="14" fill="#0a4f96"/><text x="264.500" y="1063" font-size="12" font-weight="bold" fill="#fff" text-anchor="middle">O</text><path d="M273 1053h9v7h-9z" fill="#3a9bdc"/><rect x="270" y="1061" width="14" height="11" fill="#e8b07a"/><path d="M270 1061l7 6 7-6" stroke="#fff" fill="none"/>
<!-- word, excel -->
<rect x="312" y="1050" width="18" height="20" fill="#fff"/><rect x="308" y="1048" width="15" height="24" fill="#2b579a"/><text x="315.500" y="1065" font-size="13" font-weight="bold" fill="#fff" text-anchor="middle">W</text><path d="M325 1054h4M325 1058h4M325 1062h4" stroke="#2b579a"/>
<rect x="362" y="1050" width="17" height="20" fill="#fff"/><rect x="357" y="1048" width="14" height="24" fill="#217346"/><text x="364" y="1065" font-size="13" font-weight="bold" fill="#fff" text-anchor="middle">X</text><path d="M373 1054h5M373 1058h5M373 1062h5" stroke="#217346"/>
<!-- adobe -->
<g stroke-width="1.500" transform="translate(0,-1)">
<rect x="406" y="1049" width="21" height="22" fill="#00251e" stroke="#00e4bb"/><text class="tb" x="416.500" y="1065" fill="#00e4bb">Au</text>
<rect x="455" y="1049" width="21" height="22" fill="#001c26" stroke="#b4d4e4"/><text class="tb" x="465.500" y="1065" fill="#b4d4e4">Lr</text>
<rect x="504.500" y="1049" width="21" height="22" fill="#001d26" stroke="#31c5f0"/><text class="tb" x="515" y="1065" fill="#31c5f0">Ps</text>
<rect x="553.500" y="1049" width="21" height="22" fill="#2b1a52" stroke="#a88ae0"/><path d="M558 1054l12 14h-12z" fill="#a88ae0"/>
<rect x="602.500" y="1049" width="21" height="22" fill="#1c0a26" stroke="#c99cf5"/><text class="tb" x="613" y="1065" fill="#c99cf5">Ae</text>
<rect x="651.500" y="1049" width="21" height="22" fill="#2a0a29" stroke="#d98ae8"/><text class="tb" x="662" y="1065" fill="#d98ae8">Pr</text>
<rect x="700.500" y="1049" width="21" height="22" fill="#2e0a1c" stroke="#f0407f"/><text class="tb" x="711" y="1065" fill="#f0407f">Id</text>
<rect x="749.500" y="1049" width="21" height="22" fill="#2e1300" stroke="#ff8f00"/><text class="tb" x="760" y="1065" fill="#ff9a00">Ai</text>
<rect x="798.500" y="1049" width="21" height="22" fill="#2c1f00" stroke="#e8b000"/><text class="tb" x="809" y="1065" fill="#e8b000">Br</text>
<rect x="847.500" y="1048" width="21" height="23" fill="#101050"/><text class="tb" x="858" y="1065" fill="#9999ff">An</text>
<rect x="896.500" y="1049" width="21" height="22" fill="#1a0000" stroke="#d0141a"/><path d="M901 1067c5-3 7-9 6-13 0-2 2-1 2 1 0 5 3 8 7 9-4 0-9 1-12 3z" fill="none" stroke="#eee"/>
</g>
<!-- right icons -->
<circle cx="956" cy="1060" r="11" fill="#eee"/><circle cx="956" cy="1060" r="4" fill="#e24a8d"/><path d="M956 1060v-7l4 1" stroke="#e24a8d" stroke-width="2" fill="none"/>
<path d="M1005 1051c5-1 8 3 8 9s-4 12-8 12-8-6-8-12 3-9 8-9z" fill="#4a4a3a"/><path d="M1005 1052c4 1 5 4 5 9s-2 7-5 9c-3-3-4-5-4-9s1-7 4-9z" fill="#f7a71b"/><path d="M1004 1052c0-3 2-4 4-4" stroke="#4caf50" stroke-width="2" fill="none"/>
<rect x="1043" y="1048" width="25" height="24" fill="#fff"/><rect x="1047" y="1046" width="3" height="5" fill="#3c3"/><path d="M1050 1053h7a7 7 0 010 14h-7zM1050 1060h8M1053 1064l3-7 3 7" fill="none" stroke="#d22" stroke-width="1.300"/>
<rect x="1091" y="1048" width="24" height="24" rx="2" fill="#1c83c6"/><rect x="1097" y="1051" width="12" height="18" fill="#fff"/><rect x="1100" y="1054" width="6" height="12" fill="#1c83c6"/>
<rect x="1140" y="1048" width="24" height="24" fill="#b40000"/><text x="1152" y="1067" font-size="20" font-weight="bold" font-style="italic" fill="#fff" text-anchor="middle">Fz</text>
<rect x="1191" y="1048" width="20" height="24" fill="#fff"/><rect x="1194" y="1051" width="14" height="5" fill="#111"/><path d="M1194 1059h3M1199.500 1059h3M1205 1059h3M1194 1063h3M1199.500 1063h3M1205 1063h3M1194 1067h3M1199.500 1067h3M1205 1067h3" stroke="#111" stroke-width="2"/>
<rect x="1239" y="1048" width="20" height="24" fill="#dfe9f5"/><circle cx="1249" cy="1058" r="6" fill="#8cb4de" stroke="#6b7b8c"/><path d="M1253 1062l6 8" stroke="#b89a5a" stroke-width="3"/>
<path d="M1287 1060c3-8 12-11 17-8 3 2 1 7-3 9-3 2-6 2-8 3 2 3-3 3-4 1z" fill="#e8d8cc" stroke="#c44"/><path d="M1296 1060l5 12M1304 1058l-6 14" stroke="#3aa0e0" stroke-width="1.500"/>
<rect x="1336" y="1048" width="24" height="24" rx="1" fill="#f04e12"/><path d="M1341 1068l5-11 4 4 4-10M1350 1051h5v5" fill="none" stroke="#fff" stroke-width="1.500"/>
<rect x="1385" y="1048" width="24" height="24" rx="1" fill="#76b900"/><circle cx="1401" cy="1056" r="4.500" fill="none" stroke="#fff" stroke-width="1.500"/><path d="M1398 1060l-6 6a3 3 0 003 3l6-6" fill="none" stroke="#fff" stroke-width="1.500"/>
<rect x="1434" y="1048" width="24" height="24" rx="1" fill="#2a7fd5"/><path d="M1439 1052h14l-4 8 4 8h-14l4-8z" fill="none" stroke="#fff" stroke-width="1.500"/>
<rect x="1483" y="1048" width="24" height="24" rx="1" fill="#f78d1e"/><path d="M1489 1053h12v14h-12zM1492 1059l3 5 5-10" fill="none" stroke="#fff" stroke-width="1.500"/>
<circle cx="1544" cy="1059" r="11" fill="#1ea7e1"/><text x="1544" y="1065" font-size="16" font-weight="bold" fill="#fff" text-anchor="middle">S</text><circle cx="1553" cy="1068" r="5.500" fill="#6ebc2d"/><path d="M1550 1068l2 2 4-4" stroke="#fff" fill="none"/>
<circle cx="1593" cy="1058" r="11" fill="#db4437"/><path d="M1593 1058l-10 5a11 11 0 0 1 0-10z" fill="#0f9d58"/><circle cx="1593" cy="1058" r="5" fill="#4285f4" stroke="#fff"/><rect x="1596" y="1060" width="8" height="12" fill="#6a4c3a"/>
<!-- taskbar underline -->
<g fill="#76b9ed">
<rect x="103" y="1078" width="40" height="2"/><rect x="152" y="1078" width="40" height="2"/><rect x="201" y="1078" width="40" height="2"/><rect x="250" y="1078" width="40" height="2"/><rect x="299" y="1078" width="40" height="2"/><rect x="348" y="1078" width="40" height="2"/><rect x="495" y="1078" width="40" height="2"/><rect x="736" y="1078" width="49" height="2"/><rect x="1181" y="1078" width="40" height="2"/><rect x="1524" y="1078" width="40" height="2"/><rect x="1573" y="1078" width="40" height="2"/>
</g>
<!-- tray -->
<path d="M1738 1063l5-5 5 5" fill="none" stroke="#fff" stroke-width="1.300"/>
<rect x="1762" y="1053" width="11" height="10" fill="none" stroke="#fff"/><path d="M1767 1063v4h-4" fill="none" stroke="#fff"/>
<path d="M1787 1056h3l4-4v16l-4-4h-3zM1797 1056a5 5 0 010 8M1799 1053a9 9 0 010 14" fill="none" stroke="#fff"/>
<text x="1814.500" y="1055" font-size="13" fill="#fff" textLength="41.500" lengthAdjust="spacingAndGlyphs">2:16 PM</text>
<text x="1810" y="1073" font-size="13" fill="#fff" textLength="51" lengthAdjust="spacingAndGlyphs">12/7/2017</text>
<path d="M1880 1052h15v14l-4 3v-3h-11z" fill="#fff"/><path d="M1883 1056h9M1883 1059h9M1883 1062h9" stroke="#000"/>
<circle cx="1895" cy="1068" r="7.500" fill="#222" stroke="#888"/><text x="1895" y="1072.500" font-size="12" fill="#fff" text-anchor="middle">1</text>
</svg>
</body></html>
